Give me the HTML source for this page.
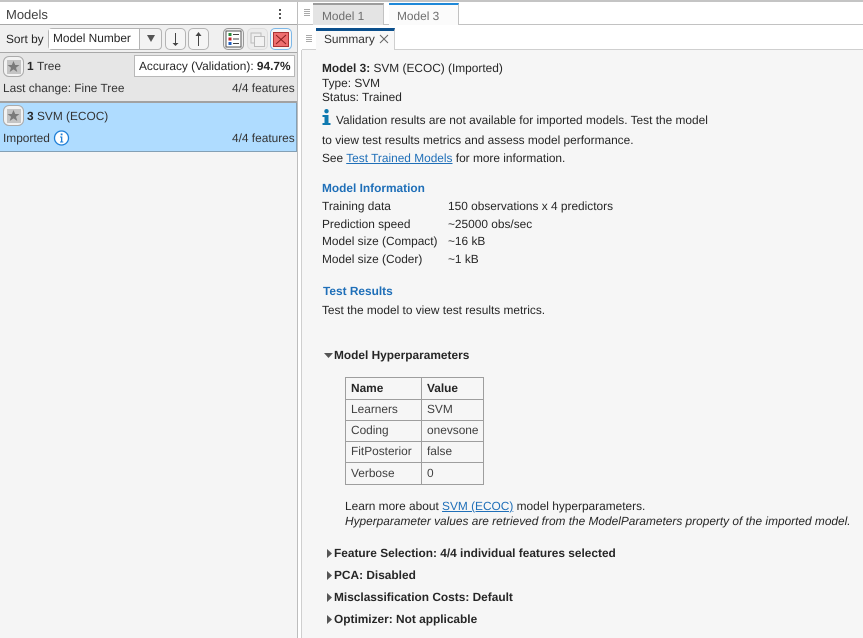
<!DOCTYPE html>
<html><head><meta charset="utf-8"><style>
html,body{margin:0;padding:0;background:#fff}
#p{position:relative;width:863px;height:638px;overflow:hidden;background:#fff;font-family:"Liberation Sans",sans-serif;font-size:11.88px;color:#262626;text-rendering:geometricPrecision;filter:blur(.3px)}
#p div,#p a,#p svg{position:absolute}
.t{white-space:nowrap;line-height:14px}
.b{font-weight:bold}
a{color:#1f6fb8;text-decoration:underline}
.btn{box-sizing:border-box;border:1px solid #b4b4b4;border-radius:5px;background:#f5f5f5}
</style></head><body><div id="p">
<div style="left:0;top:0;width:863px;height:2px;background:#c4c4c4"></div>

<!-- left panel -->
<div style="left:0;top:2px;width:297px;height:636px;background:#f5f5f5"></div>
<div style="left:0;top:2px;width:297px;height:22px;background:#fff"></div>
<div class="t" style="left:6px;top:8px;font-size:13px;color:#404040">Models</div>
<svg style="left:277px;top:9px" width="6" height="12"><g fill="#555"><rect x="2" y="0" width="2" height="2"/><rect x="2" y="4" width="2" height="2"/><rect x="2" y="8" width="2" height="2"/></g></svg>
<div style="left:0;top:24px;width:297px;height:1px;background:#a8a8a8"></div>
<div style="left:297px;top:2px;width:1px;height:636px;background:#bdbdbd"></div>
<div style="left:0;top:25px;width:297px;height:27px;background:#f0f0f0"></div>
<div class="t" style="left:6px;top:32px;color:#262626">Sort by</div>
<div style="box-sizing:border-box;left:48px;top:28px;width:114px;height:22px;border:1px solid #b4b4b4;border-radius:4px;background:#f3f3f3"></div>
<div style="box-sizing:border-box;left:49px;top:29px;width:91px;height:20px;background:#fff;border-right:1px solid #b4b4b4"></div>
<div class="t" style="left:53px;top:31px;color:#262626">Model Number</div>
<svg style="left:146px;top:35px" width="10" height="8"><path d="M1 0H9L5 7Z" fill="#555"/></svg>
<div class="btn" style="left:165px;top:28px;width:21px;height:22px"></div>
<svg style="left:165px;top:28px" width="21" height="22"><path d="M10.500 5V16" stroke="#444" stroke-width="1"/><path d="M7.500 15H13.500L10.500 18Z" fill="#444"/></svg>
<div class="btn" style="left:188px;top:28px;width:21px;height:22px"></div>
<svg style="left:188px;top:28px" width="21" height="22"><path d="M10.500 7V18" stroke="#444" stroke-width="1"/><path d="M7.500 8H13.500L10.500 4Z" fill="#444"/></svg>
<div class="btn" style="left:223px;top:28px;width:21px;height:22px;border-color:#999;background:#eee"></div>
<svg style="left:223px;top:28px" width="21" height="22"><rect x="3" y="3" width="15" height="16" fill="#fff" stroke="#555" stroke-width="1"/><rect x="5.500" y="5" width="3" height="3" fill="#2a8a3a"/><rect x="5.500" y="9.500" width="3" height="3" fill="#c0202a"/><rect x="5.500" y="14" width="3" height="3" fill="#1f5fc0"/><path d="M10 6.500H16M10 11H16M10 15.500H16" stroke="#444"/></svg>
<div class="btn" style="left:247px;top:28px;width:21px;height:22px;border-color:#ddd;background:#ececec"></div>
<svg style="left:247px;top:28px" width="21" height="22"><rect x="4" y="5" width="10" height="10" fill="#eee" stroke="#bbb"/><rect x="7.500" y="8.500" width="10" height="10" fill="#f2f2f2" stroke="#bbb"/></svg>
<div class="btn" style="left:270px;top:28px;width:22px;height:22px;border:1px solid #7db8e8;background:#f5f5f5"></div>
<svg style="left:270px;top:28px" width="22" height="22"><rect x="3.500" y="4.500" width="15" height="14" fill="#ee6f6f" stroke="#a33"/><path d="M6 7L16 16M16 7L6 16" stroke="#8a2020" stroke-width="1"/></svg>

<div style="left:0;top:52px;width:297px;height:1px;background:#a8a8a8"></div>
<!-- row 1 -->
<div style="box-sizing:border-box;left:0;top:53px;width:297px;height:50px;background:#e6e6e6;border-bottom:2px solid #a2a2a2"></div>
<div class="btn" style="left:3px;top:56px;width:21px;height:21px;border:1px solid #aaa;background:#f2f2f2;border-radius:6px"></div>
<div style="left:7px;top:60px;width:14px;height:14px;background:#c4c4c4"></div>
<svg style="left:6px;top:59px" width="15" height="15"><path d="M7.500 2L9.200 6H13.500L10 8.700L11.300 13L7.500 10.400L3.700 13L5 8.700L1.500 6H5.800Z" fill="#7a7a7a"/></svg>
<div class="t b" style="left:27px;top:59px">1</div>
<div class="t" style="left:37px;top:59px;color:#333">Tree</div>
<div style="box-sizing:border-box;left:134px;top:55px;width:161px;height:22px;background:#fff;border:1px solid #b8b8b8"></div>
<div class="t" style="left:139px;top:59px;color:#262626">Accuracy (Validation): <span class="b">94.7%</span></div>
<div class="t" style="left:3px;top:81px;color:#333">Last change: Fine Tree</div>
<div class="t" style="left:232px;top:81px;color:#333">4/4 features</div>
<!-- row 2 -->
<div style="box-sizing:border-box;left:0;top:103px;width:297px;height:49px;background:#afdcff;border-bottom:1px solid #84a0b5;border-right:1px solid #84a0b5"></div>
<div class="btn" style="left:3px;top:105px;width:21px;height:21px;border:1px solid #aaa;background:#f2f2f2;border-radius:6px"></div>
<div style="left:7px;top:109px;width:14px;height:14px;background:#c4c4c4"></div>
<svg style="left:6px;top:108px" width="15" height="15"><path d="M7.500 2L9.200 6H13.500L10 8.700L11.300 13L7.500 10.400L3.700 13L5 8.700L1.500 6H5.800Z" fill="#7a7a7a"/></svg>
<div class="t b" style="left:27px;top:109px">3</div>
<div class="t" style="left:37px;top:109px;color:#333">SVM (ECOC)</div>
<div class="t" style="left:3px;top:131px;color:#333">Imported</div>
<svg style="left:53px;top:130px" width="17" height="16"><circle cx="8.500" cy="8" r="7" fill="#fff" stroke="#1f7fd6" stroke-width="1.300"/><rect x="7.700" y="3.500" width="1.800" height="1.800" fill="#1f7fd6"/><path d="M7 6.500H9.300V11.500H10.300V12.500H7V11.500H8V7.500H7Z" fill="#1f7fd6"/></svg>
<div class="t" style="left:232px;top:131px;color:#333">4/4 features</div>

<!-- tabs -->
<div style="left:298px;top:2px;width:565px;height:22px;background:#fff"></div>
<div style="left:298px;top:24px;width:565px;height:1px;background:#c2c2c2"></div>
<svg style="left:304px;top:9px" width="6" height="8"><path d="M0 .5H6M0 2.500H6M0 4.500H6M0 6.500H6" stroke="#aaa"/></svg>
<div style="box-sizing:border-box;left:313px;top:3px;width:71px;height:22px;background:#e4e4e4;border-top:2px solid #9c9c9c;border-right:1px solid #c2c2c2"></div>
<div class="t" style="left:322px;top:9px;color:#6e6e6e">Model 1</div>
<div style="box-sizing:border-box;left:389px;top:3px;width:70px;height:22px;background:#fbfbfb;border-top:2px solid #1e88d8;border-right:1px solid #c2c2c2"></div>
<div style="left:389px;top:24px;width:69px;height:1px;background:#fbfbfb"></div>
<div class="t" style="left:397px;top:9px;color:#6e6e6e">Model 3</div>

<div style="left:298px;top:25px;width:565px;height:25px;background:#fff"></div>
<svg style="left:306px;top:35px" width="6" height="8"><path d="M0 .5H6M0 2.500H6M0 4.500H6M0 6.500H6" stroke="#aaa"/></svg>
<div style="left:302px;top:50px;width:561px;height:588px;background:#f6f6f6"></div>
<div style="left:302px;top:49px;width:561px;height:1px;background:#cfcfcf"></div>
<div style="left:301px;top:50px;width:1px;height:588px;background:#cfcfcf"></div>
<div style="box-sizing:border-box;left:316px;top:28px;width:79px;height:22px;background:#f8f8f8;border-top:3px solid #0b4f8c;border-right:1px solid #cfcfcf"></div>
<div class="t" style="left:324px;top:32px;color:#333">Summary</div>
<svg style="left:379px;top:34px" width="10" height="10"><path d="M1 1L9 9M9 1L1 9" stroke="#666" stroke-width="1"/></svg>

<!-- content -->
<div class="t" style="left:322px;top:61px"><span class="b">Model 3:</span> SVM (ECOC) (Imported)</div>
<div class="t" style="left:322px;top:76px">Type: SVM</div>
<div class="t" style="left:322px;top:90px">Status: Trained</div>
<svg style="left:322px;top:109px" width="10" height="17"><g fill="#0f7ab0"><circle cx="4.500" cy="2.200" r="2.200"/><path d="M0.500 6H6.500V14H8.500V16H0.500V14H2.500V8H0.500Z"/></g></svg>
<div class="t" style="left:336px;top:113px">Validation results are not available for imported models. Test the model</div>
<div class="t" style="left:322px;top:133px">to view test results metrics and assess model performance.</div>
<div class="t" style="left:322px;top:151px">See <a style="position:static" href="#">Test Trained Models</a> for more information.</div>

<div class="t b" style="left:322px;top:181px;color:#1f6fb8">Model Information</div>
<div class="t" style="left:322px;top:199px">Training data</div><div class="t" style="left:448px;top:199px">150 observations x 4 predictors</div>
<div class="t" style="left:322px;top:217px">Prediction speed</div><div class="t" style="left:448px;top:217px">~25000 obs/sec</div>
<div class="t" style="left:322px;top:234px">Model size (Compact)</div><div class="t" style="left:448px;top:234px">~16 kB</div>
<div class="t" style="left:322px;top:252px">Model size (Coder)</div><div class="t" style="left:448px;top:252px">~1 kB</div>

<div class="t b" style="left:323px;top:284px;color:#1f6fb8">Test Results</div>
<div class="t" style="left:322px;top:303px">Test the model to view test results metrics.</div>

<svg style="left:324px;top:353px" width="9" height="5"><path d="M0 0H9L4.500 5Z" fill="#555"/></svg>
<div class="t b" style="left:334px;top:348px">Model Hyperparameters</div>

<!-- table -->
<div style="box-sizing:border-box;left:345px;top:377px;width:139px;height:108px;border:1px solid #9e9e9e"></div>
<div style="left:421px;top:377px;width:1px;height:108px;background:#9e9e9e"></div>
<div style="left:345px;top:399px;width:139px;height:1px;background:#9e9e9e"></div>
<div style="left:345px;top:420px;width:139px;height:1px;background:#9e9e9e"></div>
<div style="left:345px;top:441px;width:139px;height:1px;background:#9e9e9e"></div>
<div style="left:345px;top:462px;width:139px;height:1px;background:#9e9e9e"></div>
<div class="t b" style="left:351px;top:381px">Name</div><div class="t b" style="left:427px;top:381px">Value</div>
<div class="t" style="left:351px;top:402px;color:#404040">Learners</div><div class="t" style="left:427px;top:402px;color:#404040">SVM</div>
<div class="t" style="left:351px;top:423px;color:#404040">Coding</div><div class="t" style="left:427px;top:423px;color:#404040">onevsone</div>
<div class="t" style="left:351px;top:444px;color:#404040">FitPosterior</div><div class="t" style="left:427px;top:444px;color:#404040">false</div>
<div class="t" style="left:351px;top:466px;color:#404040">Verbose</div><div class="t" style="left:427px;top:466px;color:#404040">0</div>

<div class="t" style="left:345px;top:499px">Learn more about <a style="position:static" href="#">SVM (ECOC)</a> model hyperparameters.</div>
<div class="t" style="left:345px;top:514px;font-style:italic">Hyperparameter values are retrieved from the ModelParameters property of the imported model.</div>

<svg style="left:327px;top:549px" width="5" height="9"><path d="M0 0L5 4.500L0 9Z" fill="#555"/></svg>
<div class="t b" style="left:334px;top:546px">Feature Selection: 4/4 individual features selected</div>
<svg style="left:327px;top:571px" width="5" height="9"><path d="M0 0L5 4.500L0 9Z" fill="#555"/></svg>
<div class="t b" style="left:334px;top:568px">PCA: Disabled</div>
<svg style="left:327px;top:593px" width="5" height="9"><path d="M0 0L5 4.500L0 9Z" fill="#555"/></svg>
<div class="t b" style="left:334px;top:590px">Misclassification Costs: Default</div>
<svg style="left:327px;top:615px" width="5" height="9"><path d="M0 0L5 4.500L0 9Z" fill="#555"/></svg>
<div class="t b" style="left:334px;top:612px">Optimizer: Not applicable</div>
</div></body></html>
